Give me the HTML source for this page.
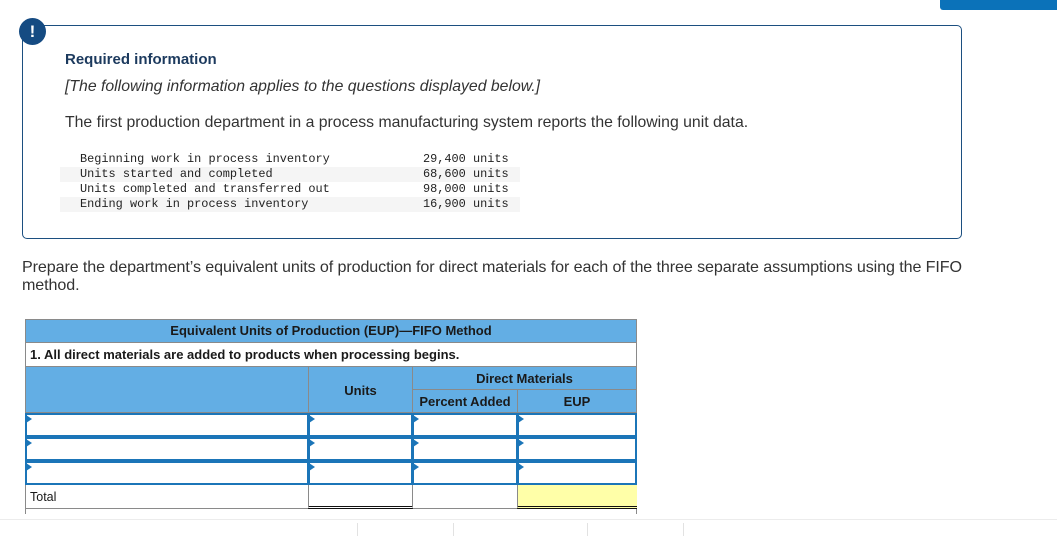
<!DOCTYPE html>
<html><head><meta charset="utf-8"><style>
*{margin:0;padding:0;box-sizing:border-box}
body{width:1057px;height:536px;position:relative;background:#fff;font-family:"Liberation Sans",Arial,sans-serif;color:#222;overflow:hidden}
.a{position:absolute}
.box{left:22px;top:25px;width:940px;height:214px;border:1px solid #1c4f80;border-radius:5px}
.icon{left:19px;top:18px;width:27px;height:27px;border-radius:50%;background:#154b82;color:#fff;font-weight:bold;font-size:17px;text-align:center;line-height:27px}
.mono{font-family:"Liberation Mono","DejaVu Sans Mono",monospace;font-size:11.9px;color:#222;white-space:pre}
.stripe{background:#f5f5f5;left:60px;width:460px;height:15px}
.c{position:absolute;font-family:"Liberation Sans Narrow","Liberation Sans",Arial,sans-serif;font-size:13px;color:#1a1a1a}
.hd{background:#63aee4;border:1px solid #8a8a8a}
.in{position:absolute;border:2px solid #1b75b8;background:#fff}
.in:before{content:"";position:absolute;left:-1px;top:0;border-left:6px solid #1b75b8;border-top:4px solid transparent;border-bottom:4px solid transparent}
.vt{position:absolute;top:523px;width:1px;height:13px;background:#e2e2e2}
</style></head><body>
<div class="a" style="left:940px;top:0;width:117px;height:10px;background:#0b72b9;border-radius:0 0 0 3px"></div>
<div class="a box"></div>
<div class="a icon">!</div>
<div class="a" style="left:65px;top:51px;font-size:15px;font-weight:bold;color:#1c3a5e">Required information</div>
<div class="a" style="left:65px;top:78px;font-size:15.8px;font-style:italic;color:#333;white-space:nowrap">[The following information applies to the questions displayed below.]</div>
<div class="a" style="left:65px;top:114px;font-size:15.8px;color:#333;white-space:nowrap">The first production department in a process manufacturing system reports the following unit data.</div>
<div class="a stripe" style="top:167px"></div>
<div class="a stripe" style="top:197px"></div>
<div class="a mono" style="left:80px;top:152px;line-height:15px">Beginning work in process inventory
Units started and completed
Units completed and transferred out
Ending work in process inventory</div>
<div class="a mono" style="left:423px;top:152px;line-height:15px">29,400 units
68,600 units
98,000 units
16,900 units</div>
<div class="a" style="left:22px;top:258px;font-size:16.1px;color:#333;line-height:18px;white-space:nowrap;letter-spacing:-0.1px">Prepare the department’s equivalent units of production for direct materials for each of the three separate assumptions using the FIFO<br>method.</div>

<!-- table -->
<div class="a hd" style="left:25px;top:319px;width:612px;height:24px"></div>
<div class="c" style="left:25px;top:323px;width:612px;text-align:center;font-weight:bold">Equivalent Units of Production (EUP)—FIFO Method</div>
<div class="a" style="left:25px;top:342px;width:612px;height:25px;border:1px solid #8a8a8a;background:#fff"></div>
<div class="c" style="left:30px;top:347px;font-weight:bold">1. All direct materials are added to products when processing begins.</div>
<div class="a hd" style="left:25px;top:366px;width:284px;height:47px"></div>
<div class="a hd" style="left:308px;top:366px;width:105px;height:47px"></div>
<div class="a hd" style="left:412px;top:366px;width:225px;height:24px"></div>
<div class="a hd" style="left:412px;top:389px;width:106px;height:24px"></div>
<div class="a hd" style="left:517px;top:389px;width:120px;height:24px"></div>
<div class="c" style="left:308px;top:383px;width:105px;text-align:center;font-weight:bold">Units</div>
<div class="c" style="left:412px;top:371px;width:225px;text-align:center;font-weight:bold">Direct Materials</div>
<div class="c" style="left:412px;top:394px;width:106px;text-align:center;font-weight:bold">Percent Added</div>
<div class="c" style="left:517px;top:394px;width:120px;text-align:center;font-weight:bold">EUP</div>

<div class="in" style="left:25px;top:413px;width:284px;height:24px"></div>
<div class="in" style="left:308px;top:413px;width:105px;height:24px"></div>
<div class="in" style="left:412px;top:413px;width:106px;height:24px"></div>
<div class="in" style="left:517px;top:413px;width:120px;height:24px"></div>
<div class="in" style="left:25px;top:437px;width:284px;height:24px"></div>
<div class="in" style="left:308px;top:437px;width:105px;height:24px"></div>
<div class="in" style="left:412px;top:437px;width:106px;height:24px"></div>
<div class="in" style="left:517px;top:437px;width:120px;height:24px"></div>
<div class="in" style="left:25px;top:461px;width:284px;height:24px"></div>
<div class="in" style="left:308px;top:461px;width:105px;height:24px"></div>
<div class="in" style="left:412px;top:461px;width:106px;height:24px"></div>
<div class="in" style="left:517px;top:461px;width:120px;height:24px"></div>

<div class="a" style="left:25px;top:485px;width:612px;height:24px;border:1px solid #8a8a8a;border-top:none"></div>
<div class="a" style="left:308px;top:485px;width:105px;height:24px;border-left:1px solid #8a8a8a;border-right:1px solid #8a8a8a;border-bottom:3px double #111;background:#fff"></div>
<div class="a" style="left:517px;top:485px;width:120px;height:24px;background:#ffffa8;border-left:1px solid #8a8a8a;border-bottom:3px double #111"></div>
<div class="c" style="left:30px;top:490px;font-size:12.5px">Total</div>
<div class="a" style="left:25px;top:509px;width:1px;height:5px;background:#8a8a8a"></div>
<div class="a" style="left:636px;top:509px;width:1px;height:5px;background:#8a8a8a"></div>

<div class="a" style="left:0;top:519px;width:1057px;height:1px;background:#ececec"></div>
<div class="vt" style="left:357px"></div>
<div class="vt" style="left:453px"></div>
<div class="vt" style="left:587px"></div>
<div class="vt" style="left:683px"></div>
</body></html>
